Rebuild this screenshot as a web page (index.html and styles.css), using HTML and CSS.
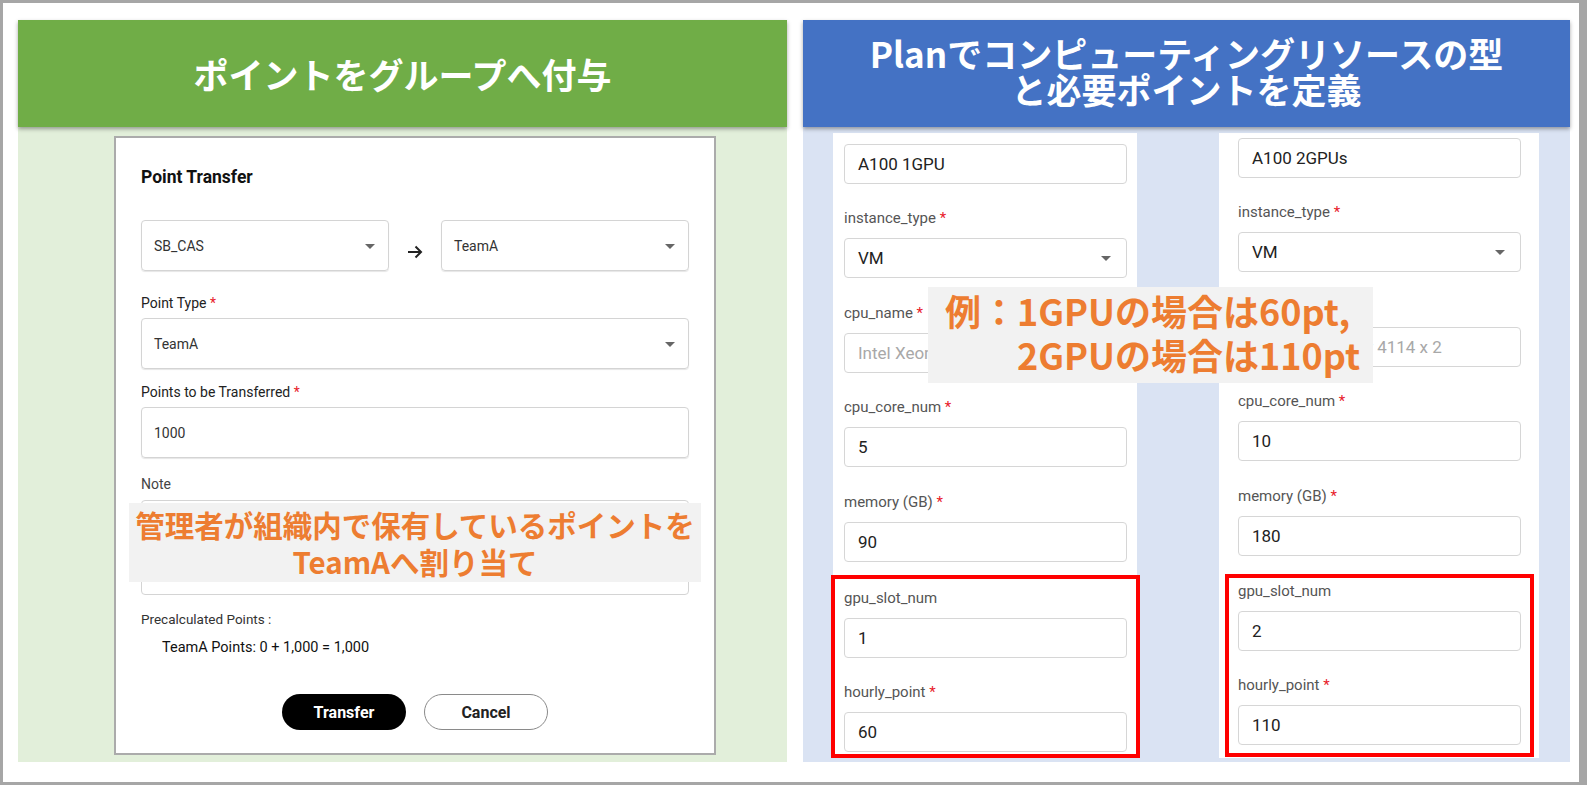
FILE: index.html
```html
<!DOCTYPE html>
<html lang="ja">
<head>
    <meta charset="UTF-8">
    <meta name="viewport" content="width=device-width, initial-scale=1.0">
    <title>ポイント付与とPlan定義</title>
    <link rel="stylesheet" href="styles.css">
</head>
<body>

<div class="frame">

    <section class="panel panel-green">
        <h2 class="panel-head">ポイントをグループへ付与</h2>
        <div class="panel-body">
            <div class="card">
                <h3 class="card-title">Point Transfer</h3>

                <div class="transfer-row">
                    <div class="select">SB_CAS<span class="caret"></span></div>
                    <svg class="arrow" width="16" height="14" viewBox="0 0 16 14">
                        <path d="M1 7h13M8.5 1.5L14 7l-5.5 5.5" fill="none" stroke="#222" stroke-width="2"/>
                    </svg>
                    <div class="select">TeamA<span class="caret"></span></div>
                </div>

                <div class="form-label">Point Type <span class="req">*</span></div>
                <div class="select">TeamA<span class="caret"></span></div>

                <div class="form-label">Points to be Transferred <span class="req">*</span></div>
                <div class="select">1000</div>

                <div class="form-label note-label">Note</div>
                <div class="textarea"></div>

                <p class="calc-title">Precalculated Points :</p>
                <p class="calc-line">TeamA Points: 0 + 1,000 = 1,000</p>

                <div class="actions">
                    <button class="btn btn-dark">Transfer</button>
                    <button class="btn btn-outline">Cancel</button>
                </div>
            </div>
        </div>
        <div class="callout callout-left">管理者が組織内で保有しているポイントを<br>TeamAへ割り当て</div>
    </section>

    <section class="panel panel-blue">
        <h2 class="panel-head">Planでコンピューティングリソースの型<br>と必要ポイントを定義</h2>
        <div class="panel-body plan-body">

            <div class="plan-col col-a">
                <div class="field first"><div class="input">A100 1GPU</div></div>
                <div class="field">
                    <div class="plan-label">instance_type <span class="req">*</span></div>
                    <div class="input">VM<span class="caret"></span></div>
                </div>
                <div class="field">
                    <div class="plan-label">cpu_name <span class="req">*</span></div>
                    <div class="input placeholder">Intel Xeon Silver 4114</div>
                </div>
                <div class="field">
                    <div class="plan-label">cpu_core_num <span class="req">*</span></div>
                    <div class="input">5</div>
                </div>
                <div class="field">
                    <div class="plan-label">memory (GB) <span class="req">*</span></div>
                    <div class="input">90</div>
                </div>
                <div class="highlight">
                    <div class="field first">
                        <div class="plan-label">gpu_slot_num</div>
                        <div class="input">1</div>
                    </div>
                    <div class="field">
                        <div class="plan-label">hourly_point <span class="req">*</span></div>
                        <div class="input">60</div>
                    </div>
                </div>
            </div>

            <div class="plan-col col-b">
                <div class="field first"><div class="input">A100 2GPUs</div></div>
                <div class="field">
                    <div class="plan-label">instance_type <span class="req">*</span></div>
                    <div class="input">VM<span class="caret"></span></div>
                </div>
                <div class="field">
                    <div class="plan-label">cpu_name <span class="req">*</span></div>
                    <div class="input placeholder">Intel Xeon Silver 4114 x 2</div>
                </div>
                <div class="field">
                    <div class="plan-label">cpu_core_num <span class="req">*</span></div>
                    <div class="input">10</div>
                </div>
                <div class="field">
                    <div class="plan-label">memory (GB) <span class="req">*</span></div>
                    <div class="input">180</div>
                </div>
                <div class="highlight">
                    <div class="field first">
                        <div class="plan-label">gpu_slot_num</div>
                        <div class="input">2</div>
                    </div>
                    <div class="field">
                        <div class="plan-label">hourly_point <span class="req">*</span></div>
                        <div class="input">110</div>
                    </div>
                </div>
            </div>

        </div>
        <div class="callout callout-right">例：1GPUの場合は60pt,<br>　　2GPUの場合は110pt</div>
    </section>

</div>

</body>
</html>
```

FILE: styles.css
```css
body {
    margin: 0;
    font-family: Roboto, "Noto Sans", sans-serif;
    background-color: #fff;
}
.frame {
    width: 1587px;
    height: 785px;
    box-sizing: border-box;
    border: 3px solid #a6a6a6;
    border-right-width: 8px;
    padding: 17px 9px 0 15px;
    display: flex;
    gap: 16px;
    background-color: #fff;
}
.panel {
    position: relative;
    display: flex;
    flex-direction: column;
    height: 742px;
}
.panel-green {
    width: 769px;
}
.panel-blue {
    flex: 1;
}
.panel-head {
    margin: 0;
    height: 107px;
    display: flex;
    align-items: center;
    justify-content: center;
    text-align: center;
    color: #fff;
    font-family: "Noto Sans CJK JP", sans-serif;
    font-size: 35px;
    font-weight: bold;
    line-height: 36px;
    box-shadow: 0 2px 4px rgba(0, 0, 0, 0.35);
    position: relative;
    z-index: 1;
}
.panel-green .panel-head {
    background-color: #70ad47;
}
.panel-blue .panel-head {
    background-color: #4472c4;
    padding-bottom: 4px;
    box-sizing: border-box;
}
.panel-body {
    flex: 1;
}
.panel-green .panel-body {
    background-color: #e2efda;
    padding: 9px 0 0 96px;
}
.panel-blue .panel-body {
    background-color: #dae3f3;
}

/* point transfer card */
.card {
    width: 602px;
    height: 619px;
    box-sizing: border-box;
    background-color: #fff;
    border: 2px solid #ababab;
    padding: 29px 25px 0 25px;
    color: #222;
}
.card-title {
    margin: 0 0 33px;
    font-size: 17.5px;
    font-weight: bold;
    line-height: 20px;
    color: #111;
}
.transfer-row {
    display: flex;
    align-items: center;
    justify-content: space-between;
}
.transfer-row .select {
    width: 248px;
}
.arrow {
    margin-top: 12px;
}
.select {
    position: relative;
    height: 51px;
    box-sizing: border-box;
    border: 1px solid #d4d4d4;
    border-radius: 4px;
    box-shadow: 0 1px 1px rgba(0, 0, 0, 0.1);
    padding-left: 12px;
    display: flex;
    align-items: center;
    font-size: 14px;
    color: #333;
}
.caret {
    position: absolute;
    right: 13px;
    top: 50%;
    margin-top: -2px;
    border-left: 5px solid transparent;
    border-right: 5px solid transparent;
    border-top: 5px solid #666;
}
.form-label {
    margin: 22px 0 5px;
    font-size: 14px;
    line-height: 20px;
    color: #222;
}
.transfer-row + .form-label {
    margin-top: 22px;
}
.select + .form-label {
    margin-top: 13px;
}
.form-label.note-label {
    margin-top: 16px;
    margin-bottom: 6px;
    color: #444;
}
.req {
    color: #e8202a;
}
.textarea {
    height: 95px;
    box-sizing: border-box;
    border: 1px solid #d4d4d4;
    border-radius: 4px;
}
.calc-title {
    margin: 16px 0 0;
    font-size: 13.5px;
    line-height: 16px;
    color: #333;
}
.calc-line {
    margin: 13px 0 0 21px;
    font-size: 14.5px;
    line-height: 16px;
    color: #111;
}
.actions {
    margin-top: 38px;
    display: flex;
    justify-content: center;
    gap: 18px;
}
.btn {
    width: 124px;
    height: 36px;
    border-radius: 18px;
    font-family: Roboto, sans-serif;
    font-size: 16px;
    font-weight: bold;
    cursor: pointer;
}
.btn-dark {
    background-color: #000;
    color: #fff;
    border: none;
}
.btn-outline {
    background-color: #fff;
    color: #222;
    border: 1.5px solid #8a8a8a;
}

/* plan definition columns */
.plan-body {
    display: flex;
    gap: 82px;
    padding: 6px 30px 4px 30px;
}
.plan-col {
    background-color: #fff;
    box-sizing: border-box;
}
.col-a {
    width: 304px;
    padding: 11px 10px 0 11px;
}
.col-b {
    width: 320px;
    padding: 5px 18px 0 19px;
}
.field .plan-label {
    margin: 24.5px 0 10px;
}
.field.first .plan-label {
    margin-top: 0;
}
.plan-label {
    font-size: 15px;
    line-height: 20px;
    color: #555;
}
.input {
    position: relative;
    height: 40px;
    box-sizing: border-box;
    border: 1px solid #d6d6d6;
    border-radius: 4px;
    padding-left: 13px;
    display: flex;
    align-items: center;
    font-size: 17px;
    color: #222;
    white-space: nowrap;
    overflow: hidden;
}
.input .caret {
    right: 15px;
    border-top-color: #666;
}
.input.placeholder {
    color: #a8a8a8;
}
.highlight {
    border: 4px solid #ff0000;
    margin: 0 -13px;
    padding: 0 9px;
}
.col-a .highlight {
    margin-top: 13px;
    padding-top: 9px;
    padding-bottom: 2px;
}
.col-b .highlight {
    margin-top: 18px;
    padding-top: 3px;
    padding-bottom: 8px;
}

/* orange callouts */
.callout {
    position: absolute;
    z-index: 2;
    background-color: #f2f2f2;
    color: #ed7d31;
    font-family: "Noto Sans CJK JP", sans-serif;
    font-weight: bold;
    box-sizing: border-box;
}
.callout-left {
    left: 111px;
    top: 483px;
    width: 572px;
    height: 79px;
    padding-top: 3px;
    text-align: center;
    font-size: 29.5px;
    line-height: 37px;
    white-space: nowrap;
}
.callout-right {
    left: 125px;
    top: 267px;
    width: 445px;
    height: 96px;
    padding: 1px 0 0 17px;
    font-size: 36px;
    line-height: 44px;
    white-space: nowrap;
}
```
